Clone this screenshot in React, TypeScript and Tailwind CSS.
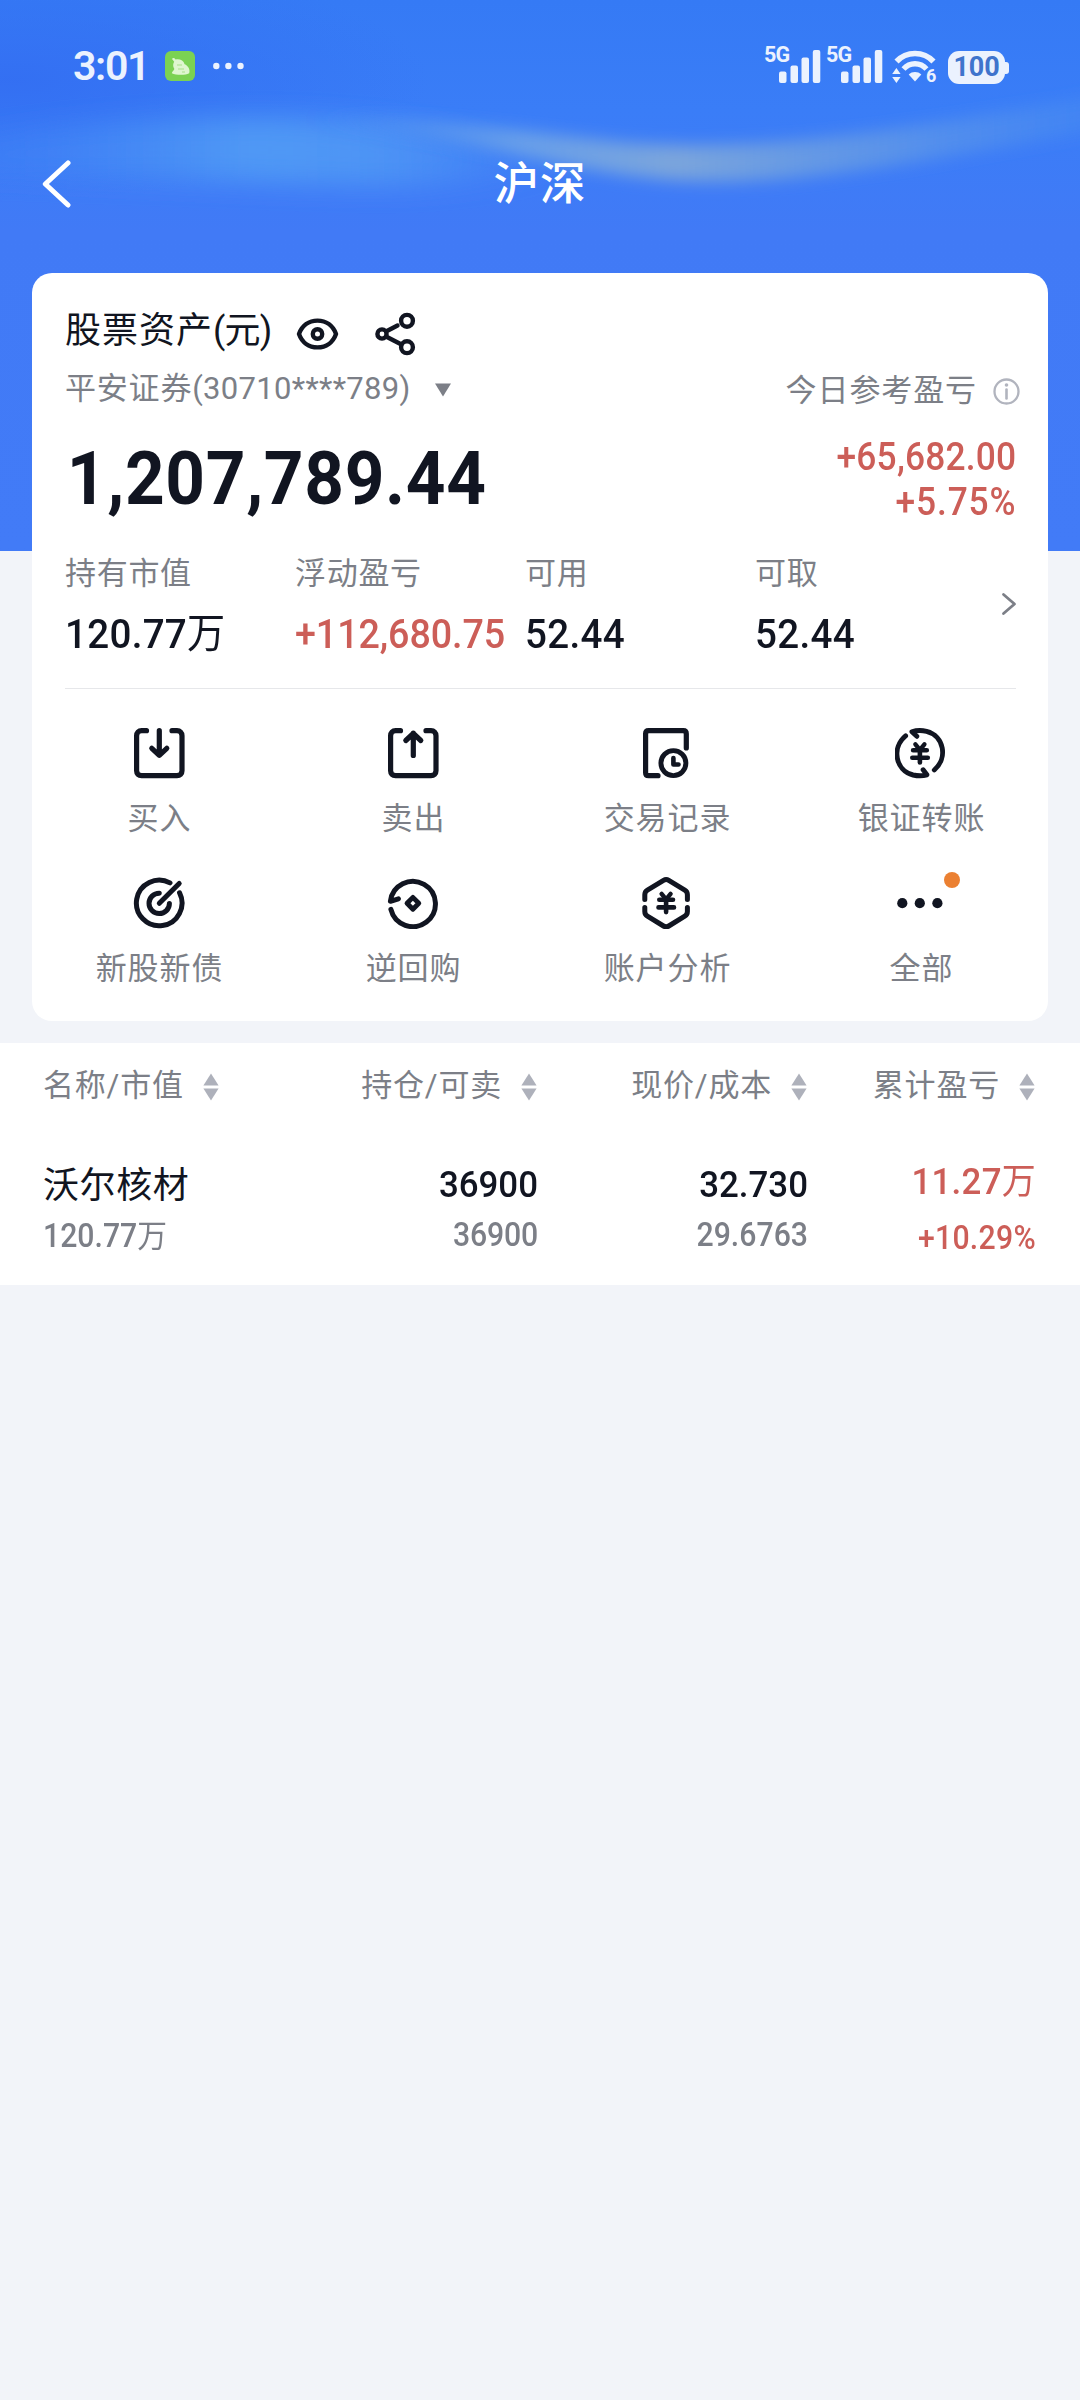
import type { ReactNode } from 'react';

const metrics = [
  { label: '持有市值', value: '120.77', unit: '万' },
  { label: '浮动盈亏', value: '+112,680.75', up: true },
  { label: '可用', value: '52.44' },
  { label: '可取', value: '52.44' },
];

const columns = ['名称/市值', '持仓/可卖', '现价/成本', '累计盈亏'];

function Wave() {
  return (
    <svg className="absolute left-0 top-0" width="1080" height="551" viewBox="0 0 1080 551">
      <defs>
        <linearGradient id="base" x1="0" y1="0" x2="0" y2="1">
          <stop offset="0" stopColor="#357af5" />
          <stop offset="0.2" stopColor="#3a7df7" />
          <stop offset="0.42" stopColor="#417af6" />
          <stop offset="1" stopColor="#427bf7" />
        </linearGradient>
        <radialGradient id="corner" cx="0.5" cy="0.5" r="0.5">
          <stop offset="0" stopColor="#336ef2" stopOpacity="0.9" />
          <stop offset="1" stopColor="#336ef2" stopOpacity="0" />
        </radialGradient>
        <linearGradient id="streak" gradientUnits="userSpaceOnUse" x1="300" y1="0" x2="1080" y2="0">
          <stop offset="0" stopColor="#5a9cf0" stopOpacity="0" />
          <stop offset="0.28" stopColor="#6da3e8" stopOpacity="0.9" />
          <stop offset="0.48" stopColor="#7ba5dc" />
          <stop offset="0.75" stopColor="#6299e6" stopOpacity="0.8" />
          <stop offset="1" stopColor="#4a8df0" stopOpacity="0.5" />
        </linearGradient>
        <linearGradient id="glow" gradientUnits="userSpaceOnUse" x1="0" y1="0" x2="560" y2="0">
          <stop offset="0" stopColor="#4186f6" stopOpacity="0.4" />
          <stop offset="0.45" stopColor="#519bf5" stopOpacity="0.95" />
          <stop offset="0.7" stopColor="#4f97f5" stopOpacity="0.85" />
          <stop offset="1" stopColor="#4a8ff6" stopOpacity="0" />
        </linearGradient>
        <filter id="soft" x="-20%" y="-60%" width="140%" height="220%">
          <feGaussianBlur stdDeviation="8" />
        </filter>
        <filter id="softer" x="-20%" y="-80%" width="140%" height="260%">
          <feGaussianBlur stdDeviation="26 13" />
        </filter>
      </defs>
      <rect width="1080" height="551" fill="url(#base)" />
      <ellipse cx="10" cy="80" rx="420" ry="120" fill="url(#corner)" />
      <path d="M-60 142C90 120 180 117 280 118C390 120 480 138 580 164C500 182 420 190 320 184C180 178 60 178 -60 174Z" fill="url(#glow)" filter="url(#softer)" />
      <path d="M300 118C430 114 520 132 620 142C760 154 900 130 1100 95L1100 130C930 160 800 186 690 181C560 175 470 134 300 118Z" fill="url(#streak)" filter="url(#soft)" />
    </svg>
  );
}

function Signal() {
  return (
    <div className="relative h-[36px] w-[55px]">
      <span className="absolute -left-[2px] -top-px text-[21.5px] font-bold leading-[16px] tracking-[-0.8px]">5G</span>
      <svg className="absolute left-[13px] top-[2px]" width="42" height="33" viewBox="0 0 42 33" fill="currentColor">
        <rect x="0" y="21.5" width="7.5" height="11.5" rx="2" />
        <rect x="11.5" y="15.5" width="7.5" height="17.5" rx="2" />
        <rect x="22.5" y="7.5" width="7.5" height="25.5" rx="2" />
        <rect x="33.8" y="0" width="7.5" height="33" rx="2" />
      </svg>
    </div>
  );
}

function StatusBar() {
  return (
    <div className="flex h-[132px] items-center pl-[73px] pr-[71px] text-[#ebf2fe]">
      <span className="w-[92px] text-[41px] font-semibold leading-[48px] tracking-[-1.3px]">3:01</span>
      <svg width="30" height="30" viewBox="0 0 30 30">
        <rect width="30" height="30" rx="6" fill="#7bd252" />
        <path d="M7 8C7.6 6.4 9.8 6.6 10.6 8.6C14.5 7.6 18.6 9.5 19.6 13.2C23 14.5 25.4 18.5 24.2 22.2C20 24.6 11 24.2 6.8 22.2C7 20.2 9 19.5 9.4 18C7.6 15.5 8 12.5 9.2 10.8Z" fill="#dff6cf" />
        <path d="M12 14h5M13 18h6M17 21h3" stroke="#a9df8b" strokeWidth="1.2" />
      </svg>
      <svg className="ml-[18px]" width="31" height="8" viewBox="0 0 31 8" fill="currentColor">
        <circle cx="3.3" cy="4" r="3.2" />
        <circle cx="15.4" cy="4" r="3.2" />
        <circle cx="27.5" cy="4" r="3.2" />
      </svg>
      <div className="ml-auto flex items-end">
        <Signal />
        <div className="w-[7px]" />
        <Signal />
        <svg className="ml-[9px] overflow-visible" width="46" height="34" viewBox="0 0 46 34" fill="none" stroke="currentColor">
          <path d="M4.5 11.5C14.5 0.8 31.5 0.8 41.5 11.5" strokeWidth="5.6" />
          <path d="M11.5 19C17.8 12 28.2 12 34.5 19" strokeWidth="5.4" />
          <path d="M16.7 24.5C20 21.2 26 21.2 29.3 24.5L23 31.5Z" fill="currentColor" stroke="none" />
          <path d="M4.4 18L8.6 24H0.2ZM4.4 33L8.6 27H0.2Z" fill="currentColor" stroke="none" />
        </svg>
        <span className="-mb-[1px] -ml-[12px] w-[12px] text-[18px] font-bold leading-[19px]">6</span>
        <div className="ml-[10px] flex items-center">
          <div className="flex h-[33px] w-[57px] items-center justify-center rounded-[11px] bg-[#ebf2fe] text-[27px] font-bold leading-[33px] tracking-[-0.2px] text-[#3f74cc]">
            100
          </div>
          <div className="h-[12px] w-[4px] rounded-r-[3px] bg-[#ebf2fe]" />
        </div>
      </div>
    </div>
  );
}

function Icon({ children }: { children: ReactNode }) {
  return (
    <svg width="52" height="52" viewBox="0 0 52 52" fill="none" stroke="#111521" strokeWidth="5.2" strokeLinecap="round" strokeLinejoin="round">
      {children}
    </svg>
  );
}

const yen = (
  <>
    <path d="M21.8 17.3L26.3 22.8L30.8 17.3" strokeWidth="4.4" />
    <path d="M26.3 22.8V35.5M19.5 23.2H33.2M18.7 30.8H34.2" strokeWidth="4.6" />
  </>
);

const actions = [
  {
    label: '买入',
    icon: (
      <Icon>
        <path d="M13.5 3.7H8.6C5.5 3.7 3.6 5.6 3.6 8.7V43.8C3.6 46.9 5.5 48.7 8.6 48.7H44C47 48.7 49 46.9 49 43.8V8.7C49 5.6 47 3.7 44 3.7H39" />
        <path d="M26.3 3.7V28M18.8 21.3L26.3 28.3L33.8 21.3" />
      </Icon>
    ),
  },
  {
    label: '卖出',
    icon: (
      <Icon>
        <path d="M13.5 3.7H8.6C5.5 3.7 3.6 5.6 3.6 8.7V43.8C3.6 46.9 5.5 48.7 8.6 48.7H44C47 48.7 49 46.9 49 43.8V8.7C49 5.6 47 3.7 44 3.7H39" />
        <path d="M26.3 28.5V6M18.8 13.5L26.3 6.5L33.8 13.5" />
      </Icon>
    ),
  },
  {
    label: '交易记录',
    icon: (
      <Icon>
        <path d="M45.3 21V6.7C45.3 4.7 44.3 3.7 42.3 3.7H7.6C5.6 3.7 4.6 4.7 4.6 6.7V45.7C4.6 47.7 5.6 48.7 7.6 48.7H17" />
        <circle cx="32.4" cy="36.1" r="12.5" strokeWidth="4.9" />
        <path d="M32.4 31V37.5H37.5" strokeWidth="4.6" />
      </Icon>
    ),
  },
  {
    label: '银证转账',
    icon: (
      <Icon>
        <g transform="translate(-1.4 0)">
          <path d="M12 8.8C-2.2 20.5 1.6 43.5 19.5 48C24 49 29.5 49 33.3 47.8L29.5 42.8" strokeWidth="4.9" />
          <path d="M40.7 43C54.5 31 50.5 8.8 33 4.3C28.7 3.3 23 3.2 18.3 4.8L23.2 9.3" strokeWidth="4.9" />
          {yen}
        </g>
      </Icon>
    ),
  },
  {
    label: '新股新债',
    icon: (
      <Icon>
        <path d="M37 5.9A22.8 22.8 0 1 0 46.6 15.8" strokeWidth="5" />
        <path d="M26.3 16.2A10.2 10.2 0 1 0 36.4 26.4" strokeWidth="5" />
        <path d="M26.3 26.3L46.2 6.4" strokeWidth="5" />
      </Icon>
    ),
  },
  {
    label: '逆回购',
    icon: (
      <Icon>
        <path d="M3.9 32.4A22.6 22.6 0 1 0 3.4 24.3L11.4 21.8" strokeWidth="5" />
        <path d="M25.9 20.4L31.8 26.3L25.9 32.2L20 26.3Z" strokeWidth="4.8" />
      </Icon>
    ),
  },
  {
    label: '账户分析',
    icon: (
      <Icon>
        <path d="M3.8 22.5V17.8C3.8 15.5 4.6 14.3 6.4 13.2L22.5 3.4C24.3 2.3 26 2.3 27.8 3.4L43.8 13.2C45.6 14.3 46.4 15.5 46.4 17.8V22.5" strokeWidth="5" />
        <path d="M3.8 30.5V34.6C3.8 36.9 4.6 38.1 6.4 39.2L22.5 49C24.3 50.1 26 50.1 27.8 49L43.8 39.2C45.6 38.1 46.4 36.9 46.4 34.6V30.5" strokeWidth="5" />
        <g transform="translate(-1.2 -0.4)">{yen}</g>
      </Icon>
    ),
  },
  {
    label: '全部',
    dot: true,
    icon: (
      <Icon>
        <g fill="#111521" stroke="none">
          <circle cx="7.3" cy="26.2" r="5.1" />
          <circle cx="24.8" cy="26.2" r="5.1" />
          <circle cx="42.4" cy="26.2" r="5.1" />
        </g>
      </Icon>
    ),
  },
];

function SortIcon() {
  return (
    <svg width="16" height="28" viewBox="0 0 16 28" fill="#aeb1bb">
      <path d="M8 0.5L15.6 12.5H0.4Z" />
      <path d="M8 27.5L15.6 15.5H0.4Z" />
    </svg>
  );
}

export default function App() {
  return (
    <div className="relative h-[2400px] w-[1080px] overflow-hidden bg-[#f2f4f9] font-['Roboto','Noto_Sans_CJK_SC',sans-serif] text-[#111521]">
      <Wave />
      <div className="relative">
        <StatusBar />

        <div className="grid h-[103px] grid-cols-[1fr_auto_1fr] items-center pl-[41px] pr-[41px] text-white">
          <svg width="30" height="50" viewBox="0 0 30 50" fill="none" stroke="currentColor" strokeWidth="5" strokeLinecap="round" strokeLinejoin="round">
            <path d="M27 4L4.3 25L27 46" />
          </svg>
          <h1 className="pt-[3px] text-[45.5px] font-medium leading-[60px] tracking-[1px]">沪深</h1>
        </div>

        <section className="mx-[32px] mt-[38px] h-[748px] rounded-[20px] bg-white pt-[33px]">
          <div className="pl-[33px] pr-[32px]">
            <div className="flex h-[48px] items-center">
              <span className="w-[231px] whitespace-nowrap pt-[2px] text-[36px] leading-[48px] tracking-[1px]">
                股票资产<span className="tracking-[-0.8px]">(元)</span>
              </span>
              <svg className="mt-[7px]" width="43" height="34" viewBox="0 0 43 34" fill="none" stroke="#111521" strokeWidth="4.4">
                <path d="M3 17C6 8.5 13 3.6 21.5 3.6S37 8.5 40 17C37 25.5 30 30.4 21.5 30.4S6 25.5 3 17Z" strokeLinejoin="round" />
                <circle cx="21.5" cy="17" r="4.7" />
              </svg>
              <svg className="ml-[35px] mt-[7px]" width="44" height="44" viewBox="0 0 44 44" fill="none" stroke="#111521" strokeWidth="4.4">
                <circle cx="8" cy="22" r="4.6" />
                <circle cx="33" cy="8.8" r="5.9" />
                <circle cx="33" cy="35.2" r="5.9" />
                <path d="M12 19.5L23.5 13.5M12 24.5L27.5 32.5" strokeLinecap="round" />
              </svg>
            </div>

            <div className="mt-[14px] flex h-[40px] items-center text-[#7c7f87]">
              <span className="whitespace-nowrap pt-[2px] text-[31px] leading-[40px] tracking-[0.8px]">
                平安证券<span className="tracking-[0.3px]">(30710****789)</span>
              </span>
              <svg className="ml-[24px] mt-[4px]" width="16" height="14" viewBox="0 0 16 14" fill="currentColor">
                <path d="M0 0.5H16L8 13.5Z" />
              </svg>
              <span className="ml-auto whitespace-nowrap pt-[5px] text-[31px] leading-[40px] tracking-[0.9px]">今日参考盈亏</span>
              <svg className="-mr-[4px] ml-[16px] mt-[7px]" width="27" height="27" viewBox="0 0 27 27" fill="none" stroke="#b1b4be" strokeWidth="2.3">
                <circle cx="13.5" cy="13.5" r="12" />
                <path d="M13.5 11.5V20.5" strokeWidth="2.6" strokeLinecap="round" />
                <circle cx="13.5" cy="7" r="1.8" fill="#b1b4be" stroke="none" />
              </svg>
            </div>

            <div className="mt-[26px] flex h-[90px] justify-between">
              <div className="origin-left scale-x-[0.93] pl-[2px] pt-px text-[74.5px] font-bold leading-[88px] tracking-[0.7px]">1,207,789.44</div>
              <div className="origin-right scale-x-[0.93] pt-px text-right text-[38px] font-medium leading-[45px] tracking-[0.2px] text-[#cc5e58]">
                <div>+65,682.00</div>
                <div className="tracking-[0.9px]">+5.75%</div>
              </div>
            </div>

            <div className="mt-[29px] flex">
              {metrics.map((m) => (
                <div key={m.label} className="w-[230px] whitespace-nowrap">
                  <div className="pt-px text-[31px] leading-[40px] tracking-[0.7px] text-[#7c7f87]">{m.label}</div>
                  <div
                    className={
                      m.up
                        ? 'mt-[15px] origin-left scale-x-[0.93] text-[40.5px] font-medium leading-[50px] tracking-[-0.1px] text-[#cc5e58]'
                        : 'mt-[15px] origin-left scale-x-[0.93] text-[41.5px] font-medium leading-[50px] tracking-[0.3px]'
                    }
                  >
                    {m.value}
                    {m.unit && <span className="text-[41px] font-normal">{m.unit}</span>}
                  </div>
                </div>
              ))}
              <svg className="-mr-[2px] ml-[16px] mt-[39px] shrink-0" width="16" height="24" viewBox="0 0 16 24" fill="none" stroke="#7c7f87" strokeWidth="2.8" strokeLinecap="round" strokeLinejoin="round">
                <path d="M2.5 2.5L13.5 12L2.5 21.5" />
              </svg>
            </div>

            <div className="mt-[29px] h-px bg-[#e6e7ea]" />
          </div>

          <div className="grid grid-cols-4 gap-y-[38px] pt-[38px]">
            {actions.map((a) => (
              <button key={a.label} className="flex flex-col items-center">
                <span className="relative">
                  {a.icon}
                  {a.dot && <span className="absolute left-[49px] top-[-5px] size-[16px] rounded-full bg-[#eb8032]" />}
                </span>
                <span className="mt-[20px] pl-px text-[31px] leading-[40px] tracking-[0.9px] text-[#7c7f87]">{a.label}</span>
              </button>
            ))}
          </div>
        </section>

        <section className="mt-[22px] h-[242px] bg-white pl-[43px] pt-[23px]">
          <div className="grid grid-cols-[262px_232px_270px_228px] text-[#7c7f87]">
            {columns.map((c) => (
              <div key={c} className="flex items-center justify-end whitespace-nowrap text-[31px] leading-[40px] tracking-[0.8px] first:justify-start">
                {c}
                <span className="ml-[19px] mt-px">
                  <SortIcon />
                </span>
              </div>
            ))}
          </div>
          <div className="mt-[53px] grid grid-cols-[262px_232px_270px_228px] text-right text-[37.5px] font-medium leading-[50px]">
            <div className="pt-[2px] text-left text-[36px] font-normal tracking-[0.6px]">沃尔核材</div>
            <div className="-mr-px origin-right scale-x-[0.93]">36900</div>
            <div className="-mr-px origin-right scale-x-[0.93]">32.730</div>
            <div className="-mr-px -mt-[3px] origin-right scale-x-[0.93] tracking-[0.3px] text-[#cc5e58]">
              11.27<span className="text-[36.5px] font-normal">万</span>
            </div>
          </div>
          <div className="mt-[4px] grid grid-cols-[262px_232px_270px_228px] text-right text-[32.5px] font-medium leading-[40px] text-[#7c7f87]">
            <div className="origin-left scale-x-[0.93] pt-px text-left">
              120.77<span className="text-[32px] font-normal">万</span>
            </div>
            <div className="-mr-px origin-right scale-x-[0.93] tracking-[-0.2px]">36900</div>
            <div className="-mr-px origin-right scale-x-[0.93]">29.6763</div>
            <div className="-mr-px origin-right scale-x-[0.93] pt-[3px] tracking-[0.3px] text-[#cc5e58]">+10.29%</div>
          </div>
        </section>
      </div>
    </div>
  );
}
